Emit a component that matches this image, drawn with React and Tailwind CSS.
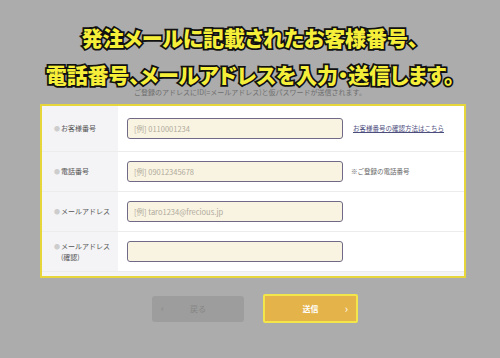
import React from 'react';

const jp = "font-['Noto_Sans_CJK_JP','Noto_Sans',sans-serif]";

const Row = ({ label, sub, placeholder, note, link, tall }) => (
    <div className={`flex border-b border-[#ececec] ${tall ? 'h-[46px]' : 'h-[40px]'}`}>
        <div className="w-[76px] shrink-0 bg-[#f4f4f6] flex items-center pl-[12px]">
            <div className="text-[7px] leading-[11px] text-[#555]">
                <span className="text-[#cdcdcd] text-[6px] mr-[1px]">●</span>
                {label}
                {sub && <div className="pl-[7px]">{sub}</div>}
            </div>
        </div>
        <div className="flex-1 bg-white flex items-center pl-[9px]">
            <div className="w-[216px] h-[21px] bg-[#f9f4e2] border border-[#706a88] rounded-[3px] flex items-center pl-[6px] text-[7.5px] text-[#b0aa9c]">
                {placeholder}
            </div>
            {link && (
                <span className="ml-[10px] text-[6.5px] text-[#4d4d7d] underline">{link}</span>
            )}
            {note && (
                <span className="ml-[8px] text-[6.5px] text-[#666]">{note}</span>
            )}
        </div>
    </div>
);

const App = () => {
    return (
        <div className={`relative w-[500px] h-[358px] overflow-hidden bg-[#acacac] ${jp}`}>
            {/* Page underneath */}
            <div className="flex flex-col items-center pt-[88px]">
                <p className="text-[7px] leading-[9px] text-[#6e6e6e]">
                    ご登録のアドレスにID(=メールアドレス)と仮パスワードが送信されます。
                </p>
                <div className="mt-[7px] ml-[6px] w-[426px] border-2 border-[#e6d63c] bg-[#f4f4f6] pb-[4px]">
                    <Row tall label="お客様番号" placeholder="[例] 0110001234" link="お客様番号の確認方法はこちら" />
                    <Row label="電話番号" placeholder="[例] 09012345678" note="※ご登録の電話番号" />
                    <Row label="メールアドレス" placeholder="[例] taro1234@frecious.jp" />
                    <Row label="メールアドレス" sub="(確認)" placeholder="" />
                </div>
                <div className="flex items-center gap-[19px] mt-[16px] ml-[10px]">
                    <button className="w-[92px] h-[26px] rounded-[3px] bg-[#9d9d9d] relative flex items-center justify-center text-[8px] text-[#868686]">
                        <span className="absolute left-[9px] text-[9px]">‹</span>
                        戻る
                    </button>
                    <button className="w-[95px] h-[29px] rounded-[2px] bg-[#e4b349] border-2 border-[#f2e64a] relative flex items-center justify-center text-[8px] font-bold text-white">
                        送信
                        <span className="absolute right-[8px] text-[11px] font-normal">›</span>
                    </button>
                </div>
            </div>

            {/* Caption overlay */}
            <div className="absolute inset-x-0 top-[19px] flex flex-col items-center">
                <p className="text-[21px] leading-[37px] font-black text-[#f6ef3a] [-webkit-text-stroke:3.5px_#111] [paint-order:stroke_fill] [font-feature-settings:'palt'] tracking-[-0.1px]">
                    発注メールに記載されたお客様番号、
                </p>
                <p className="text-[21px] leading-[37px] font-black text-[#f6ef3a] [-webkit-text-stroke:3.5px_#111] [paint-order:stroke_fill] [font-feature-settings:'palt'] tracking-[-0.1px]">
                    電話番号、メールアドレスを入力・送信します。
                </p>
            </div>
        </div>
    );
};

export default App;
